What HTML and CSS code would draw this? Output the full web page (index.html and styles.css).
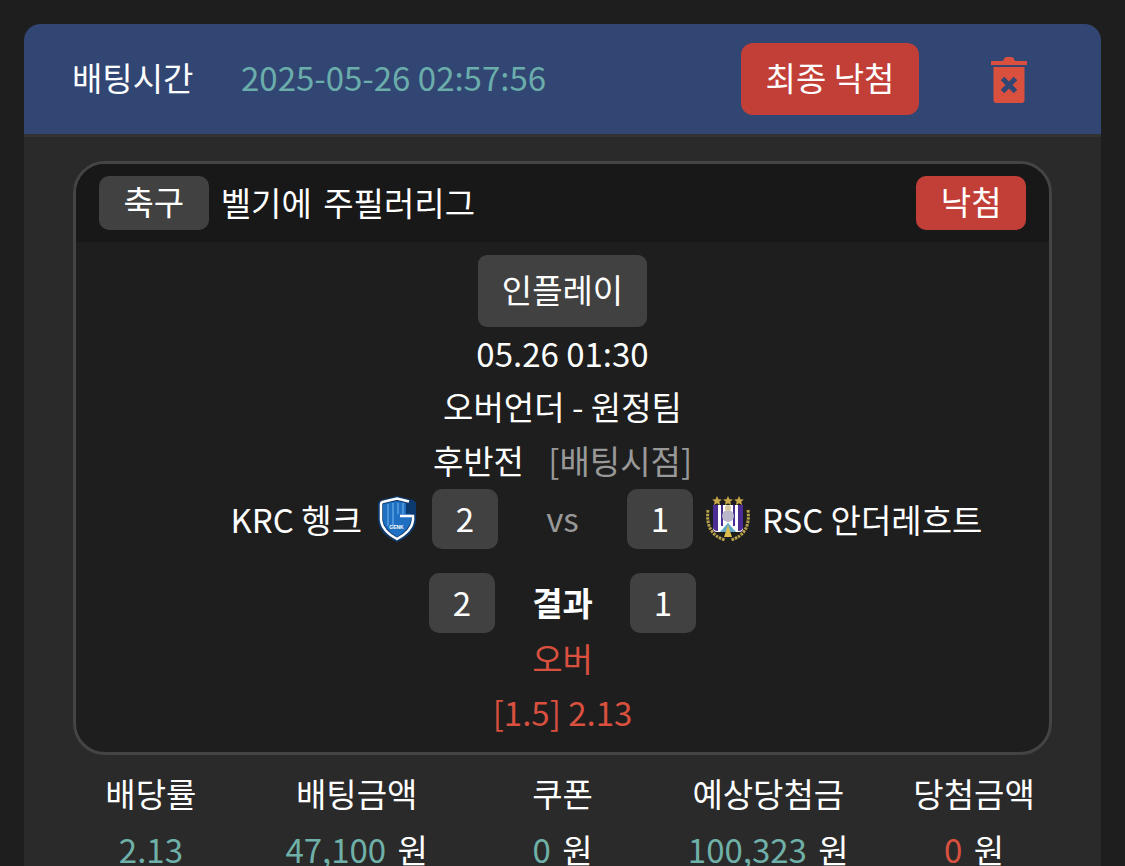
FILE: index.html
```html
<!DOCTYPE html>
<html>
<head>
  <meta charset="UTF-8" />
  <meta name="viewport" content="width=device-width, initial-scale=1.0" />
  <title>배팅내역</title>
  <link rel="stylesheet" href="styles.css">
</head>
<body>

<div class="bet-card">
  <header class="bet-head">
    <span class="bet-label">배팅시간</span>
    <span class="bet-time">2025-05-26 02:57:56</span>
    <button class="btn-result">최종 낙첨</button>
    <svg class="icon-trash" viewBox="0 0 38 48" aria-label="삭제">
      <path fill="#d9503f" d="M1 10 1 6 13 6 14.500 3Q15.200 2 17 2L21 2Q22.800 2 23.500 3L25 6 37 6 37 10Z"/>
      <path fill="#d9503f" d="M3.500 12 34.500 12 34.500 45Q34.500 48 31.500 48L6.500 48Q3.500 48 3.500 45Z"/>
      <path fill="none" stroke="#324673" stroke-width="5" d="M12.500 23.500 25.500 36.500M25.500 23.500 12.500 36.500"/>
    </svg>
  </header>

  <div class="bet-body">
    <section class="game">
      <div class="game-top">
        <span class="chip">축구</span>
        <span class="league">벨기에 주필러리그</span>
        <span class="chip chip-lose">낙첨</span>
      </div>

      <div class="game-main">
        <span class="chip chip-play">인플레이</span>
        <p class="line line-date">05.26 01:30</p>
        <p class="line line-market">오버언더 - 원정팀</p>
        <p class="line line-period">후반전 <span class="muted">[배팅시점]</span></p>

        <div class="score-row">
          <div class="team team-home">
            <span>KRC 헹크</span>
            <svg class="logo-genk" viewBox="0 0 38 46">
              <path fill="#0d3a6e" d="M3 4 19 0 35 4Q38 5 38 8L38 24Q37 38 19 46 1 38 0 24L0 8Q0 5 3 4Z"/>
              <path fill="#1f6fc2" d="M5 8 19 5 28 7 28 18 33 18 33 24Q32 33 19 41 6 33 5 24Z"/>
              <path fill="none" stroke="#5aa2e2" stroke-width="1.500" d="M10 8V30M15 7V30M20 7V18M25 7V18"/>
              <path fill="none" stroke="#fff" stroke-width="2.500" d="M31 5.500 19 2.500 4.500 6Q3 6.500 3 8L3 24Q4 35 19 43 34 35 35 24L35 20 22 20"/>
              <text class="logo-text" x="18.500" y="33" text-anchor="middle">GENK</text>
            </svg>
          </div>
          <span class="score">2</span>
          <span class="vs">vs</span>
          <span class="score">1</span>
          <div class="team team-away">
            <svg class="logo-rsca" viewBox="0 0 46 46">
              <path fill="#c9a94a" d="M12 0l1.500 3.200 3.300.4-2.500 2.200.8 3.200-3.100-1.700-3.100 1.700.8-3.200-2.500-2.200 3.300-.4zM23 0l1.500 3.200 3.300.4-2.500 2.200.8 3.200-3.100-1.700-3.100 1.700.8-3.200-2.500-2.200 3.300-.4zM34 0l1.500 3.200 3.300.4-2.500 2.200.8 3.200-3.100-1.700-3.100 1.700.8-3.200-2.500-2.200 3.300-.4z"/>
              <path fill="none" stroke="#b8a24c" stroke-width="3" stroke-dasharray="2.500 1" d="M3 14Q0 38 20 44M43 14Q46 38 26 44"/>
              <path fill="#fff" d="M8 9H38V32Q38 36 34 36H12Q8 36 8 32Z"/>
              <path fill="#4b2c94" d="M8 9H13V35Q8 35 8 31ZM33 9H38V31Q38 35 33 35Z"/>
              <path fill="#4b2c94" d="M16 9H18V30H16ZM28 9H30V30H28Z"/>
              <circle cx="23" cy="20" r="6" fill="#b9b7c9"/>
              <circle cx="23" cy="12" r="3" fill="#d8c9a0"/>
              <path fill="#5fa7c2" d="M15 36 23 27 31 36Z"/>
              <path fill="#dcbc4c" d="M19 41 23 29 27 41Z"/>
            </svg>
            <span>RSC 안더레흐트</span>
          </div>
        </div>

        <div class="score-row score-row-result">
          <span class="team"></span>
          <span class="score">2</span>
          <span class="vs vs-result">결과</span>
          <span class="score">1</span>
          <span class="team"></span>
        </div>

        <p class="line line-pick red">오버</p>
        <p class="line line-odds red">[1.5] 2.13</p>
      </div>
    </section>

    <div class="stats">
      <div class="stat">
        <span class="stat-name">배당률</span>
        <span class="stat-val"><b class="teal">2.13</b></span>
      </div>
      <div class="stat">
        <span class="stat-name">배팅금액</span>
        <span class="stat-val"><b class="teal">47,100</b> 원</span>
      </div>
      <div class="stat">
        <span class="stat-name">쿠폰</span>
        <span class="stat-val"><b class="teal">0</b> 원</span>
      </div>
      <div class="stat">
        <span class="stat-name">예상당첨금</span>
        <span class="stat-val"><b class="teal">100,323</b> 원</span>
      </div>
      <div class="stat">
        <span class="stat-name">당첨금액</span>
        <span class="stat-val"><b class="red">0</b> 원</span>
      </div>
    </div>
  </div>
</div>

</body>
</html>
```

FILE: styles.css
```css
* {
  box-sizing: border-box;
}

html, body {
  margin: 0;
  padding: 0;
  height: 100%;
  overflow: hidden;
}

body {
  background: #1e1e1e;
  color: #fff;
  font-family: "Noto Sans CJK KR", "Noto Sans", sans-serif;
  font-size: 33px;
  font-variant-ligatures: none;
  font-feature-settings: "calt" 0, "ccmp" 0, "locl" 0, "liga" 0, "clig" 0;
  padding: 24px 24px 0;
}

.bet-card {
  background: #2a2a2a;
  border-radius: 16px 16px 0 0;
  height: 842px;
  overflow: hidden;
}

.bet-head {
  display: flex;
  align-items: center;
  height: 113px;
  padding: 0 73px 1px 48px;
  background: #324673;
  border-bottom: 3px solid #333;
  border-radius: 16px 16px 0 0;
}

.bet-label {
  width: 169px;
  padding-bottom: 4px;
}

.bet-time {
  color: #6aadab;
  padding-bottom: 3px;
}

.btn-result {
  margin-left: auto;
  width: 178px;
  height: 72px;
  padding: 0 0 4px;
  border: none;
  border-radius: 12px;
  background: #c23f38;
  color: #fff;
  font: inherit;
}

.icon-trash {
  width: 38px;
  height: 48px;
  margin-left: 71px;
}

.bet-body {
  padding: 24px 24px 0;
}

.game {
  margin: 0 25px;
  border: 3px solid #444;
  border-radius: 32px;
  background: #1e1e1e;
  overflow: hidden;
}

.game-top {
  display: flex;
  align-items: center;
  height: 78px;
  padding: 0 23px;
  background: #181818;
}

.chip {
  display: inline-flex;
  align-items: center;
  justify-content: center;
  height: 54px;
  padding: 0 24.5px 3px;
  border-radius: 10px;
  background: #414141;
  line-height: 1;
}

.chip-lose {
  margin-left: auto;
  background: #c23f38;
}

.chip-play {
  height: 72px;
  padding: 0 24px 3px;
  border-radius: 9px;
  margin-top: 13px;
}

.league {
  margin-left: 12px;
  padding-bottom: 3px;
  word-spacing: 4px;
}

.game-main {
  display: flex;
  flex-direction: column;
  align-items: center;
  padding-bottom: 14px;
}

.line {
  margin: 0;
  line-height: 52px;
}

.line-market {
  margin-top: 1px;
}

.line-period {
  margin-top: 1px;
  line-height: 54px;
}

.muted {
  margin-left: 17px;
  color: #999;
}

.score-row {
  display: grid;
  grid-template-columns: 1fr 66px 129px 66px 1fr;
  align-items: center;
  width: 100%;
  height: 60px;
  margin-top: 2px;
}

.score-row-result {
  grid-template-columns: 1fr 66px 135px 66px 1fr;
  margin-top: 24px;
}

.score {
  display: flex;
  align-items: center;
  justify-content: center;
  height: 60px;
  padding-bottom: 3px;
  border-radius: 10px;
  background: #414141;
}

.vs {
  padding-bottom: 2px;
  text-align: center;
  color: #999;
}

.vs-result {
  color: #fff;
  font-weight: 700;
}

.team {
  display: flex;
  align-items: center;
}

.team-home {
  justify-content: flex-end;
  gap: 16px;
  padding-right: 16px;
}

.team-away {
  gap: 11px;
  padding-left: 12px;
}

.logo-genk {
  width: 38px;
  height: 46px;
}

.logo-rsca {
  width: 46px;
  height: 46px;
}

.logo-text {
  fill: #fff;
  font-family: "Liberation Sans", sans-serif;
  font-size: 5px;
  font-weight: 700;
}

.red {
  color: #d9503f;
}

.teal {
  color: #6fb0a8;
}

.line-pick {
  margin-top: -1px;
}

.line-odds {
  margin-top: 2px;
}

.stats {
  display: grid;
  grid-template-columns: repeat(5, 1fr);
  margin-top: 10px;
}

.stat {
  display: flex;
  flex-direction: column;
  align-items: center;
}

.stat-name {
  line-height: 57px;
}

.stat-val {
  margin-top: 10px;
  line-height: 34px;
  word-spacing: 4px;
}

.stat-val b {
  font-weight: 400;
}
```
